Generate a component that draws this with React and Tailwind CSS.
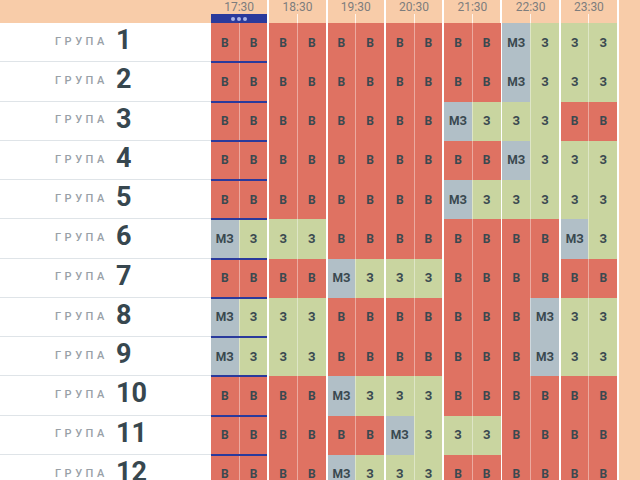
import React from 'react';

// Распоред по групи: В = ?, З = зафатено, МЗ = ...
const times = ['17:30', '18:30', '19:30', '20:30', '21:30', '22:30', '23:30'];

const B = 'В', Z = 'З', M = 'МЗ';
const raspored = [
    [B, B, B, B, B, B, B, B, B, B, M, Z, Z, Z],
    [B, B, B, B, B, B, B, B, B, B, M, Z, Z, Z],
    [B, B, B, B, B, B, B, B, M, Z, Z, Z, B, B],
    [B, B, B, B, B, B, B, B, B, B, M, Z, Z, Z],
    [B, B, B, B, B, B, B, B, M, Z, Z, Z, Z, Z],
    [M, Z, Z, Z, B, B, B, B, B, B, B, B, M, Z],
    [B, B, B, B, M, Z, Z, Z, B, B, B, B, B, B],
    [M, Z, Z, Z, B, B, B, B, B, B, B, M, Z, Z],
    [M, Z, Z, Z, B, B, B, B, B, B, B, M, Z, Z],
    [B, B, B, B, M, Z, Z, Z, B, B, B, B, B, B],
    [B, B, B, B, B, B, M, Z, Z, Z, B, B, B, B],
    [B, B, B, B, M, Z, Z, Z, B, B, B, B, B, B],
];

const boja = {
    'В': 'bg-[#df7262]',
    'З': 'bg-[#c9d5a0]',
    'МЗ': 'bg-[#b1bfc7]',
};

function Celija({ v, vtora }) {
    return (
        <div className={`flex-1 flex items-center justify-center text-[12px] font-bold text-[#3a4950] ${boja[v]} ${vtora ? 'border-l border-white/40' : ''}`}>
            {v}
        </div>
    );
}

function Red({ broj, celii }) {
    return (
        <div className="flex h-[39.25px]">
            <div className="w-[211px] shrink-0 bg-white border-b border-[#dfe4e8] flex items-center pl-[55px]">
                <span className="w-[61px] text-[11px] font-medium tracking-[3.5px] text-[#98a0a7]">ГРУПА</span>
                <span className="text-[27px] font-bold leading-none text-[#37474f] mb-[3px]">{broj}</span>
            </div>
            {times.map((t, g) => (
                <div key={t} className={`w-[58.3px] shrink-0 flex border-r-2 border-white ${g === 0 ? 'relative' : ''}`}>
                    <Celija v={celii[g * 2]} />
                    <Celija v={celii[g * 2 + 1]} vtora />
                    {g === 0 && <div className="absolute z-10 left-0 right-0 -bottom-[1px] h-[2px] bg-[#2a3a9c]" />}
                </div>
            ))}
        </div>
    );
}

export default function App() {
    return (
        <div className="w-[640px] h-[480px] overflow-hidden bg-[#f8cca9] font-['Roboto',sans-serif]">
            <div className="flex h-[23px]">
                <div className="w-[211px] shrink-0 overflow-hidden pl-[52px]">
                    <div className="-mt-[13px] text-[12px] tracking-[3px] text-[#a09488]">ТЕРМИНИ</div>
                </div>
                {times.map((t, g) => (
                    <div key={t} className="w-[58.3px] shrink-0 flex flex-col border-r-2 border-white">
                        <div className="h-[14px] text-center text-[12px] leading-[14px] text-[#7d7d7d]">{t}</div>
                        {g === 0 ? (
                            <div className="h-[9px] bg-[#2a3a9c] flex items-center justify-center gap-[2px]">
                                <span className="w-[4px] h-[4px] rounded-full bg-[#a9b3e6]" />
                                <span className="w-[4px] h-[4px] rounded-full bg-[#a9b3e6]" />
                                <span className="w-[4px] h-[4px] rounded-full bg-[#a9b3e6]" />
                            </div>
                        ) : (
                            <div className="h-[9px] flex">
                                <div className="flex-1" />
                                <div className="flex-1 border-l border-white/80" />
                            </div>
                        )}
                    </div>
                ))}
            </div>
            {raspored.map((celii, i) => (
                <Red key={i} broj={i + 1} celii={celii} />
            ))}
        </div>
    );
}
